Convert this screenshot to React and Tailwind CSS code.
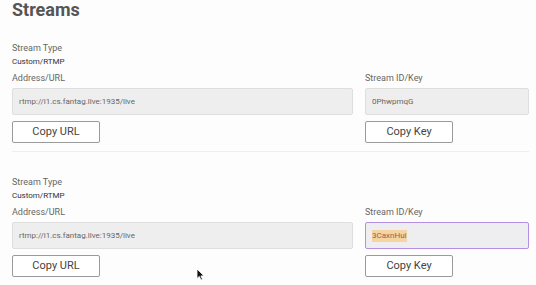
import React from "react";

function Field({ label, value, button, focused, width }) {
  return (
    <div className={width}>
      <div className="mt-[5px] h-[12px] text-[9px] leading-[12px] text-[#666]">{label}</div>
      <div
        className={`mt-[4px] flex h-[27px] items-center rounded-[2px] border pl-[6px] text-[8px] text-[#666] ${
          focused ? "border-[#b590e2] bg-[#eeedef]" : "border-[#dedede] bg-[#eeeeee]"
        }`}
      >
        {focused ? (
          <span className="bg-[#f6d3a3] text-[#8a6a4a]">{value}</span>
        ) : (
          <span>{value}</span>
        )}
      </div>
      <button className="mt-[6px] flex h-[22px] w-[88px] items-center justify-center rounded-[2px] border border-[#9a9a9a] bg-white text-[11px] text-[#444]">
        {button}
      </button>
    </div>
  );
}

function Section({ keyValue, focused }) {
  return (
    <div>
      <div className="h-[12px] text-[9px] leading-[12px] text-[#666]">Stream Type</div>
      <div className="mt-[3px] h-[10px] text-[8px] leading-[10px] text-[#333]">Custom/RTMP</div>
      <div className="flex gap-[12px]">
        <Field
          width="w-[341px]"
          label="Address/URL"
          value="rtmp://i1.cs.fantag.live:1935/live"
          button="Copy URL"
        />
        <Field
          width="w-[164px]"
          label="Stream ID/Key"
          value={keyValue}
          button="Copy Key"
          focused={focused}
        />
      </div>
    </div>
  );
}

export default function App() {
  return (
    <div
      className="relative h-[285px] w-[536px] overflow-hidden bg-[#fdfdfd] pl-[12px]"
      style={{ fontFamily: "Roboto, sans-serif" }}
    >
      <div className="h-[20px] text-[18px] font-bold leading-[20px] text-[#555]">Streams</div>
      <div className="mt-[22px]">
        <Section keyValue="0PhwpmqG" />
      </div>
      <div className="mt-[8px] h-px w-[517px] bg-[#eeeeee]" />
      <div className="mt-[24px]">
        <Section keyValue="3CaxnHui" focused />
      </div>
      <svg
        className="absolute left-[196px] top-[268px]"
        width="9"
        height="13"
        viewBox="0 0 9 13"
      >
        <path d="M1 1 L1 10.5 L3.3 8.4 L5 12 L6.5 11.3 L4.9 7.9 L8 7.9 Z" fill="#111" stroke="#fff" strokeWidth="0.8" />
      </svg>
    </div>
  );
}
